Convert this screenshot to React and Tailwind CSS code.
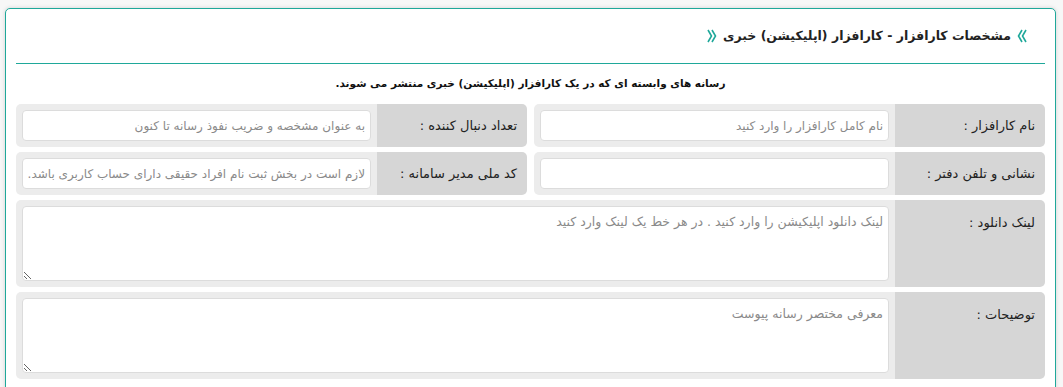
import React from 'react';

const font = { fontFamily: '"DejaVu Sans", "Noto Sans", sans-serif' };

// left: points toward the left, otherwise toward the right
const Chevrons = ({ left }) => (
  <svg width="10" height="14" viewBox="0 0 10 14">
    {left ? (
      <>
        <polyline points="5,1 1.5,7 5,13" fill="none" stroke="#1fa89a" strokeWidth="1.6" />
        <polyline points="9,1 5.5,7 9,13" fill="none" stroke="#1fa89a" strokeWidth="1.6" />
      </>
    ) : (
      <>
        <polyline points="1,1 4.5,7 1,13" fill="none" stroke="#1fa89a" strokeWidth="1.6" />
        <polyline points="5,1 8.5,7 5,13" fill="none" stroke="#1fa89a" strokeWidth="1.6" />
      </>
    )}
  </svg>
);

const Field = ({ label, placeholder }) => (
  <div className="flex h-[43px] rounded-[5px] overflow-hidden">
    <div className="w-[150px] shrink-0 bg-[#d6d6d6] flex items-center pr-[10px] text-[13px] text-[#222]">{label}</div>
    <div className="flex-1 bg-[#ececec] p-[6px]">
      <input
        type="text"
        placeholder={placeholder}
        className="w-full h-full bg-white border border-[#dcdcdc] rounded-[4px] px-[5px] text-[12px] text-[#333] placeholder:text-[#8a8a8a] outline-none"
        style={font}
      />
    </div>
  </div>
);

const AreaField = ({ label, placeholder }) => (
  <div className="flex h-[87px] rounded-[5px] overflow-hidden">
    <div className="w-[150px] shrink-0 bg-[#d6d6d6] pr-[10px] pt-[13px] text-[13px] text-[#222]">{label}</div>
    <div className="flex-1 bg-[#ececec] p-[6px]">
      <textarea
        placeholder={placeholder}
        className="w-full h-full bg-white border border-[#dcdcdc] rounded-[4px] px-[5px] py-[6px] text-[12.5px] text-[#333] placeholder:text-[#8a8a8a] outline-none block"
        style={font}
      />
    </div>
  </div>
);

export default function App() {
  return (
    <div dir="rtl" className="min-h-[387px] bg-[#f7f7f7] pt-[8px] pb-[20px]" style={font}>
      <div className="ml-[5px] mr-[7px] bg-white border border-[#1fa89a] rounded-[5px] shadow-[0_0_4px_rgba(0,0,0,0.15)] px-[10px] pb-[12px]">
        <div className="h-[54px] flex items-center pr-[18px] gap-[6px]">
          <Chevrons left />
          <span className="text-[12.5px] font-bold text-[#222]">مشخصات کارافزار - کارافزار (اپلیکیشن) خبری</span>
          <Chevrons />
        </div>
        <div className="h-px bg-[#1fa89a]" />
        <p className="text-center text-[10.5px] font-bold text-[#111] h-[40px] flex items-center justify-center">
          رسانه های وابسته ای که در یک کارافزار (اپلیکیشن) خبری منتشر می شوند.
        </p>
        <div className="flex flex-col gap-[5px]">
          <div className="grid grid-cols-2 gap-[7px]">
            <Field label="نام کارافزار :" placeholder="نام کامل کارافزار را وارد کنید" />
            <Field label="تعداد دنبال کننده :" placeholder="به عنوان مشخصه و ضریب نفوذ رسانه تا کنون" />
          </div>
          <div className="grid grid-cols-2 gap-[7px]">
            <Field label="نشانی و تلفن دفتر :" placeholder="" />
            <Field label="کد ملی مدیر سامانه :" placeholder="لازم است در بخش ثبت نام افراد حقیقی دارای حساب کاربری باشد." />
          </div>
          <AreaField label="لینک دانلود :" placeholder="لینک دانلود اپلیکیشن را وارد کنید . در هر خط یک لینک وارد کنید" />
          <AreaField label="توضیحات :" placeholder="معرفی مختصر رسانه پیوست" />
        </div>
      </div>
    </div>
  );
}
